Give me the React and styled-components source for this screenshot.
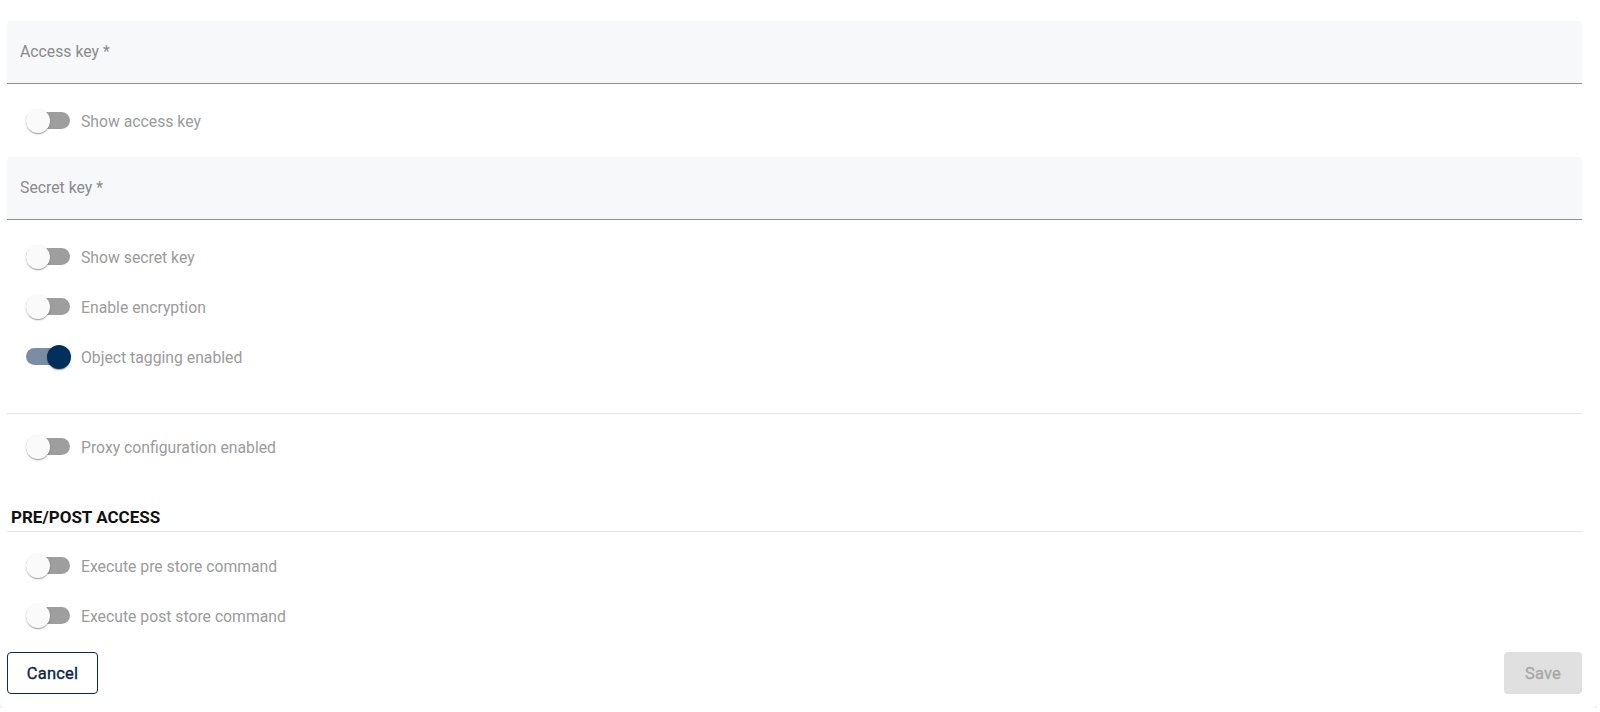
import React, { useState } from 'react';
import styled, { createGlobalStyle } from 'styled-components';

const GlobalStyle = createGlobalStyle`
  html, body {
    margin: 0;
    padding: 0;
    background: #ffffff;
    font-family: Roboto, "Liberation Sans", Arial, sans-serif;
  }
  * { box-sizing: border-box; }
`;

const Card = styled.div`
  width: 1597px;
  height: 708px;
  background: #ffffff;
  border-radius: 0 0 6px 6px;
  box-shadow: 0 4px 0 #f2f2f2;
  padding: 21px 15px 13px 7px;
  display: flex;
  flex-direction: column;
`;

const Field = styled.div`
  height: 63px;
  background: #f7f8fa;
  border-radius: 4px 4px 0 0;
  border-bottom: 1px solid #8f8f8f;
  display: flex;
  align-items: center;
  padding: 0 0 2px 13px;
  color: #8a8a8a;
  font-size: 15.8px;
  margin-top: ${(p) => p.$top || 0}px;
`;

const Row = styled.label`
  height: 50px;
  display: flex;
  align-items: center;
  gap: 11px;
  padding-left: 19px;
  margin-top: ${(p) => p.$top || 0}px;
  color: #9b9b9b;
  font-size: 15.75px;
  cursor: pointer;
`;

const SwitchBox = styled.span`
  position: relative;
  width: 44px;
  height: 24px;
  display: inline-flex;
  align-items: center;
  flex-shrink: 0;
`;

const Track = styled.span`
  width: 44px;
  height: 17px;
  border-radius: 9px;
  margin-top: -2px;
  background: ${(p) => (p.$on ? '#7a8da4' : '#9e9e9e')};
`;

const Thumb = styled.span`
  position: absolute;
  top: 0;
  left: ${(p) => (p.$on ? '21px' : '0')};
  width: 24px;
  height: 24px;
  border-radius: 50%;
  background: ${(p) => (p.$on ? '#03305a' : '#fafafa')};
  box-shadow: 0 2px 1px -1px rgba(0, 0, 0, 0.2), 0 1px 1px 0 rgba(0, 0, 0, 0.14),
    0 1px 3px 0 rgba(0, 0, 0, 0.12);
`;

const Divider = styled.hr`
  border: none;
  height: 1px;
  background: #e4e4e4;
  margin: ${(p) => p.$top || 0}px 0 0 0;
`;

const Heading = styled.h3`
  margin: 35px 0 0 0;
  padding: 0 0 4px 4px;
  font-size: 17px;
  line-height: 20px;
  font-weight: 700;
  color: #111111;
  border-bottom: 1px solid #e4e4e4;
`;

const Footer = styled.div`
  margin-top: 11px;
  display: flex;
  justify-content: space-between;
`;

const Button = styled.button`
  height: 42px;
  border-radius: 4px;
  font-family: Roboto, "Liberation Sans", Arial, sans-serif;
  font-size: 16.5px;
  font-weight: 400;
  letter-spacing: 0.2px;
  -webkit-text-stroke: 0.35px currentColor;
  padding: 0;
  border: ${(p) => (p.$primary ? 'none' : '1px solid #0b2a4d')};
  background: ${(p) => (p.$primary ? '#e0e0e0' : '#ffffff')};
  color: ${(p) => (p.$primary ? '#a8a8a8' : '#0b2545')};
  width: ${(p) => (p.$primary ? '78px' : '91px')};
  cursor: ${(p) => (p.$primary ? 'default' : 'pointer')};
`;

const Toggle = ({ label, initial, top }) => {
  const [on, setOn] = useState(!!initial);
  return (
    <Row $top={top} onClick={() => setOn(!on)}>
      <SwitchBox>
        <Track $on={on} />
        <Thumb $on={on} />
      </SwitchBox>
      {label}
    </Row>
  );
};

const App = () => {
  return (
    <>
      <GlobalStyle />
      <Card>
        <Field>Access key *</Field>
        <Toggle top={12} label="Show access key" />
        <Field $top={11}>Secret key *</Field>
        <Toggle top={12} label="Show secret key" />
        <Toggle label="Enable encryption" />
        <Toggle label="Object tagging enabled" initial />
        <Divider $top={31} />
        <Toggle top={8} label="Proxy configuration enabled" />
        <Heading>PRE/POST ACCESS</Heading>
        <Toggle top={9} label="Execute pre store command" />
        <Toggle label="Execute post store command" />
        <Footer>
          <Button>Cancel</Button>
          <Button $primary disabled>Save</Button>
        </Footer>
      </Card>
    </>
  );
};

export default App;
